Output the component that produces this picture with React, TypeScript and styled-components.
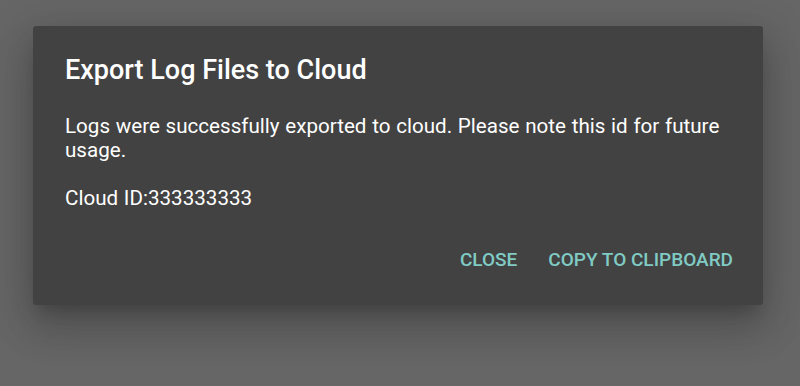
import styled, { createGlobalStyle } from 'styled-components';

const Global = createGlobalStyle`
  html, body {
    margin: 0;
    padding: 0;
    background: #666666;
    font-family: Roboto, 'Noto Sans', sans-serif;
  }
`;

const Backdrop = styled.div`
  width: 800px;
  height: 386px;
  box-sizing: border-box;
  padding: 26px 37px 0 33px;
  background: #666666;
`;

const Dialog = styled.div`
  box-sizing: border-box;
  width: 730px;
  height: 279px;
  background: #424242;
  border-radius: 3px;
  box-shadow: 0 11px 15px -7px rgba(0, 0, 0, 0.2), 0 24px 38px 3px rgba(0, 0, 0, 0.14),
    0 9px 46px 8px rgba(0, 0, 0, 0.12);
  display: flex;
  flex-direction: column;
  padding: 28px 0 0;
`;

const Title = styled.h2`
  margin: 0;
  padding: 0 32px;
  color: #ffffff;
  font-size: 27px;
  font-weight: 500;
  line-height: 32px;
`;

const Content = styled.div`
  padding: 28px 32px 0;
  color: #ffffff;
  font-size: 20.6px;
  line-height: 24.4px;
  word-spacing: 0.6px;
`;

const Paragraph = styled.p`
  margin: 0 0 23px;
`;

const Actions = styled.div`
  display: flex;
  justify-content: flex-end;
  gap: 15px;
  padding: 0 22px 0 0;
  margin-top: auto;
  margin-bottom: 28px;
`;

const ActionButton = styled.button`
  background: none;
  border: none;
  padding: 0 8px;
  height: 36px;
  color: #80cbc4;
  font-family: Roboto, 'Noto Sans', sans-serif;
  font-size: 19px;
  font-weight: 500;
  text-transform: uppercase;
  cursor: pointer;
`;

export default function App() {
  return (
    <>
      <Global />
      <Backdrop>
        <Dialog>
          <Title>Export Log Files to Cloud</Title>
          <Content>
            <Paragraph>
              Logs were successfully exported to cloud. Please note this id for future usage.
            </Paragraph>
            <Paragraph>Cloud ID:333333333</Paragraph>
          </Content>
          <Actions>
            <ActionButton>Close</ActionButton>
            <ActionButton>Copy to clipboard</ActionButton>
          </Actions>
        </Dialog>
      </Backdrop>
    </>
  );
}
